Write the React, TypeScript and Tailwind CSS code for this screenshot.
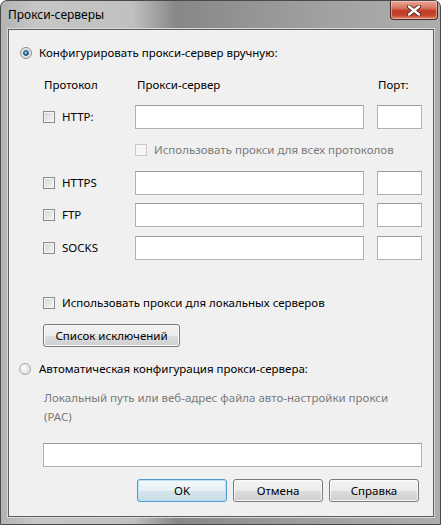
import React from "react";

function Checkbox({ disabled = false }: { disabled?: boolean }) {
  return (
    <span
      className={
        disabled
          ? "inline-block w-[12px] h-[12px] border border-[#c9c9c9] bg-[#f6f6f6] shrink-0"
          : "inline-block w-[12px] h-[12px] border border-[#8c8c8c] bg-[linear-gradient(135deg,#d2d2d2_0%,#e6e6e6_50%,#f7f7f7_100%)] shadow-[inset_0_0_0_1px_#f4f4f4] shrink-0"
      }
    />
  );
}

function Radio({ checked = false }: { checked?: boolean }) {
  return checked ? (
    <span className="relative inline-flex items-center justify-center w-[12px] h-[12px] rounded-full border border-[#8a8a8a] bg-[radial-gradient(circle_at_50%_50%,#f4f4f4_0%,#d8d8d8_100%)] shrink-0">
      <span className="w-[6px] h-[6px] rounded-full bg-[radial-gradient(circle_at_40%_35%,#9fd8f2_0%,#3d8fc0_45%,#1b4f7a_100%)] border border-[#174a72]" />
    </span>
  ) : (
    <span className="inline-block w-[12px] h-[12px] rounded-full border border-[#a9a9a9] bg-[radial-gradient(circle_at_40%_40%,#ffffff_0%,#e2e2e2_60%,#cfcfcf_100%)] shrink-0" />
  );
}

function TextBox({ className = "" }: { className?: string }) {
  return (
    <div
      className={
        "h-[24px] bg-white border border-[#b0b0b0] border-t-[#9c9c9c] shrink-0 " + className
      }
    />
  );
}

function Button({
  children,
  className = "",
  primary = false,
}: {
  children: React.ReactNode;
  className?: string;
  primary?: boolean;
}) {
  return (
    <div
      className={
        "h-[23px] rounded-[3px] flex items-center justify-center text-black " +
        (primary
          ? "border border-[#4b9cd0] shadow-[inset_0_0_0_1px_#b9e2f7] bg-[linear-gradient(180deg,#f4f8fa_0%,#e8f1f5_50%,#d6e5ec_51%,#c9dbe4_100%)] "
          : "border border-[#7a7a7a] shadow-[inset_0_0_0_1px_#fbfbfb] bg-[linear-gradient(180deg,#f3f3f3_0%,#ebebeb_50%,#dddddd_51%,#cfcfcf_100%)] ") +
        className
      }
    >
      {children}
    </div>
  );
}

function ProtoRow({ label, mt }: { label: string; mt: string }) {
  return (
    <div className={"flex items-center h-[24px] " + mt}>
      <div className="w-[126px] shrink-0 pl-[34px] flex items-center gap-[7px]">
        <Checkbox />
        <span>{label}</span>
      </div>
      <TextBox className="w-[229px]" />
      <TextBox className="w-[45px] ml-[13px]" />
    </div>
  );
}

export default function App() {
  return (
    <div
      className="w-[441px] h-[525px] flex flex-col border border-[#4a4a4a] rounded-t-[7px] overflow-hidden bg-[linear-gradient(90deg,#b3b3b3_0%,#c6c6c6_8%,#c0c0c0_30%,#878787_40%,#939393_55%,#a2a2a2_75%,#adadad_100%)] text-[11.5px] text-black"
      style={{ fontFamily: '"Noto Sans", "Open Sans", sans-serif' }}
    >
      <div className="h-[28px] flex items-start shrink-0">
        <span className="ml-[7px] mt-[5px] text-[12px] text-black">Прокси-серверы</span>
        <div className="ml-auto mr-[2px] w-[48px] h-[19px] rounded-b-[4px] border border-t-0 border-[#4f2a24] bg-[linear-gradient(180deg,#e9a99b_0%,#d6735f_40%,#bf3a22_55%,#c4482d_80%,#dc8b72_100%)] shadow-[inset_0_0_0_1px_rgba(255,220,210,0.5)] flex items-center justify-center">
          <svg width="14" height="11" viewBox="0 0 14 11">
            <path
              d="M2 1.5 L12 9.5 M12 1.5 L2 9.5"
              stroke="#5a2218"
              strokeWidth="4.2"
              strokeLinecap="round"
            />
            <path
              d="M2 1.5 L12 9.5 M12 1.5 L2 9.5"
              stroke="#ffffff"
              strokeWidth="2.4"
              strokeLinecap="round"
            />
          </svg>
        </div>
      </div>
      <div className="ml-[7px] mr-[6px] mb-[7px] flex-1 border border-[#5e5e5e] shadow-[0_0_0_1px_#d8d8d8] bg-[#f0f0f0] flex flex-col">
        <div className="h-[45px] flex items-center pl-[11px] gap-[7px]">
          <Radio checked />
          <span>Конфигурировать прокси-сервер вручную:</span>
        </div>
        <div className="h-[20px] flex items-center">
          <span className="w-[128px] pl-[35px]">Протокол</span>
          <span className="w-[241px]">Прокси-сервер</span>
          <span>Порт:</span>
        </div>
        <ProtoRow label="HTTP:" mt="mt-[10px]" />
        <div className="h-[24px] mt-[9px] flex items-center pl-[126px] gap-[7px] text-[#7a7a7a]">
          <Checkbox disabled />
          <span>Использовать прокси для всех протоколов</span>
        </div>
        <ProtoRow label="HTTPS" mt="mt-[9px]" />
        <ProtoRow label="FTP" mt="mt-[8px]" />
        <ProtoRow label="SOCKS" mt="mt-[9px]" />
        <div className="h-[20px] mt-[33px] flex items-center pl-[34px] gap-[7px]">
          <Checkbox />
          <span>Использовать прокси для локальных серверов</span>
        </div>
        <div className="mt-[11px] pl-[34px]">
          <Button className="w-[137px]">Список исключений</Button>
        </div>
        <div className="h-[20px] mt-[12px] flex items-center pl-[10px] gap-[8px]">
          <Radio />
          <span>Автоматическая конфигурация прокси-сервера:</span>
        </div>
        <div className="mt-[9px] pl-[35px] pr-[20px] leading-[19px] text-[#7a7a7a]">
          Локальный путь или веб-адрес файла авто-настройки прокси
          <br />
          (PAC)
        </div>
        <div className="mt-[17px] pl-[34px] pr-[11px]">
          <TextBox className="w-full" />
        </div>
        <div className="mt-[12px] flex pl-[128px] gap-[6px]">
          <Button primary className="w-[90px]">OK</Button>
          <Button className="w-[90px]">Отмена</Button>
          <Button className="w-[90px]">Справка</Button>
        </div>
      </div>
    </div>
  );
}
